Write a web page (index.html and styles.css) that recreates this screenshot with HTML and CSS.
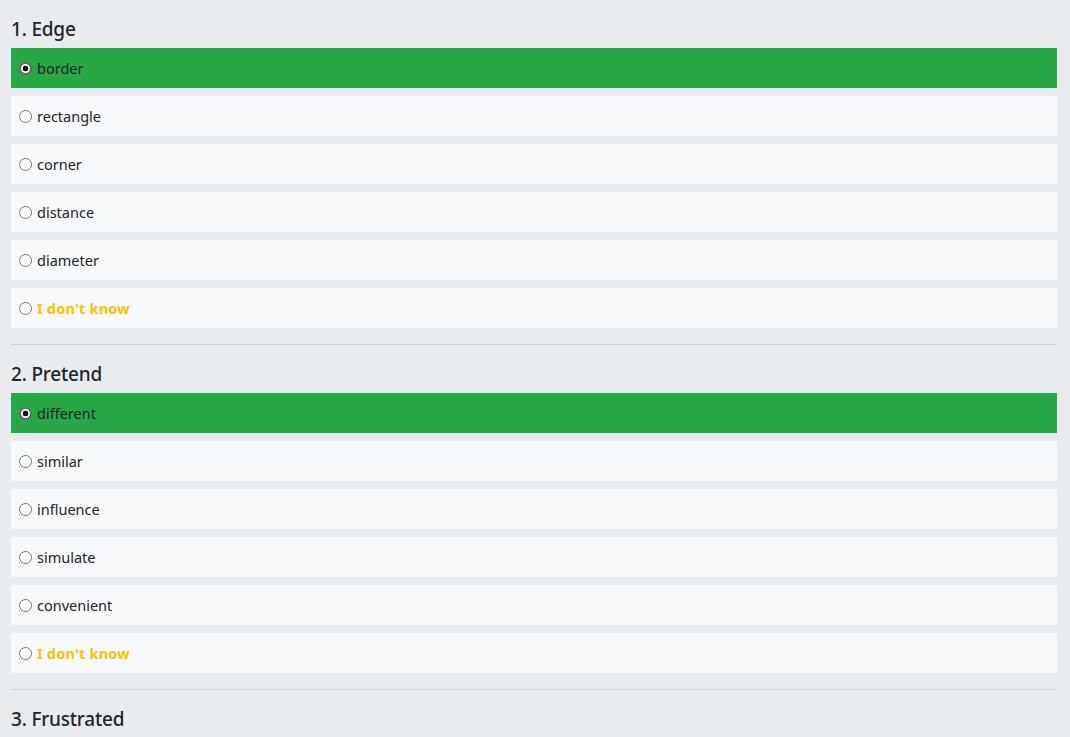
FILE: index.html
```html
<!DOCTYPE html>
<html>
<head>
<meta charset="utf-8">
<link rel="stylesheet" href="styles.css">
</head>
<body>
<div class="quiz">
  <section class="question">
    <h2 class="title">1. Edge</h2>
    <div class="options">
      <label class="option selected"><input type="radio" name="q1" checked><span>border</span></label>
      <label class="option"><input type="radio" name="q1"><span>rectangle</span></label>
      <label class="option"><input type="radio" name="q1"><span>corner</span></label>
      <label class="option"><input type="radio" name="q1"><span>distance</span></label>
      <label class="option"><input type="radio" name="q1"><span>diameter</span></label>
      <label class="option"><input type="radio" name="q1"><span class="unknown">I don't know</span></label>
    </div>
  </section>
  <hr class="sep">
  <section class="question">
    <h2 class="title">2. Pretend</h2>
    <div class="options">
      <label class="option selected"><input type="radio" name="q2" checked><span>different</span></label>
      <label class="option"><input type="radio" name="q2"><span>similar</span></label>
      <label class="option"><input type="radio" name="q2"><span>influence</span></label>
      <label class="option"><input type="radio" name="q2"><span>simulate</span></label>
      <label class="option"><input type="radio" name="q2"><span>convenient</span></label>
      <label class="option"><input type="radio" name="q2"><span class="unknown">I don't know</span></label>
    </div>
  </section>
  <hr class="sep">
  <section class="question">
    <h2 class="title">3. Frustrated</h2>
  </section>
</div>
</body>
</html>
```
FILE: styles.css
```css
html, body {
  margin: 0;
  padding: 0;
  background: #e9ecef;
}
body {
  font-family: "Noto Sans", "Open Sans", sans-serif;
  color: #212529;
}
.quiz {
  padding: 17px 13px 0 11px;
}
.title {
  margin: 0 0 7px 0;
  font-size: 19px;
  line-height: 24px;
  font-weight: 500;
  letter-spacing: -0.2px;
}
.options {
  display: flex;
  flex-direction: column;
  gap: 8px;
}
.option {
  display: flex;
  align-items: center;
  height: 40px;
  background: #f8f9fa;
  padding-left: 8px;
  font-size: 14.5px;
}
.option.selected {
  background: #28a745;
}
.option input {
  appearance: none;
  -webkit-appearance: none;
  box-sizing: border-box;
  margin: 0 5px 0 0;
  width: 13px;
  height: 13px;
  border-radius: 50%;
  border: 1.5px solid #767676;
  background: #fff;
  flex: none;
}
.option input:checked {
  border: 2px solid #6b6b6b;
  background: radial-gradient(circle, #111 0, #111 2.6px, #fff 3.2px);
}
.unknown {
  color: #ffc107;
  font-weight: 700;
  letter-spacing: 0.2px;
}
.sep {
  border: 0;
  border-top: 1px solid #d0d3d6;
  margin: 16px 0 17px 0;
}
```
